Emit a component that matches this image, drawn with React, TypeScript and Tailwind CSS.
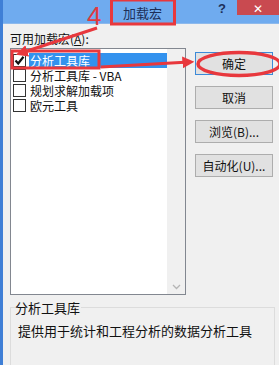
const items = [
  { label: "分析工具库", checked: true },
  { label: "分析工具库 - VBA", checked: false },
  { label: "规划求解加载项", checked: false },
  { label: "欧元工具", checked: false },
];

const buttons = ["确定", "取消", "浏览(B)...", "自动化(U)..."];

const CheckBox = ({ checked }: { checked: boolean }) => (
  <div className="w-[13px] h-[13px] border border-[#333] bg-white flex items-center justify-center shrink-0">
    {checked && (
      <svg width="11" height="11" viewBox="0 0 11 11">
        <path d="M1.5 5.5 L4.2 8.5 L9.5 1.8" stroke="#111" strokeWidth="2.2" fill="none" />
      </svg>
    )}
  </div>
);

// red marks drawn over the dialog
const Annotations = () => (
  <svg className="absolute left-0 top-0 pointer-events-none" width="279" height="365">
    <defs>
      <marker id="head" markerWidth="4" markerHeight="4" refX="2.2" refY="2" orient="auto">
        <path d="M0 0 L4 2 L0 4 Z" fill="#e8383d" />
      </marker>
    </defs>
    <rect x="108.5" y="0" width="63" height="24" fill="none" stroke="#e8383d" strokeWidth="3" />
    <rect x="9" y="51" width="87" height="17" fill="none" stroke="#e8383d" strokeWidth="3" />
    <path d="M94 28 L18 53" stroke="#e8383d" strokeWidth="3" markerEnd="url(#head)" />
    <path d="M98 67 L186 62" stroke="#e8383d" strokeWidth="3" markerEnd="url(#head)" />
    <ellipse cx="236" cy="64" rx="41" ry="11.5" fill="none" stroke="#e8383d" strokeWidth="3.5" />
  </svg>
);

export default function App() {
  return (
    <div
      className="relative w-[279px] h-[365px] overflow-hidden bg-[#f0f0f0] border-l-[3px] border-[#3f7fd6] text-[12px] text-[#111] leading-[15px]"
      style={{ fontFamily: '"Noto Sans CJK SC", "Noto Sans", sans-serif' }}
    >
      <div className="h-[24px] bg-[#6fabef] flex items-start border-b border-[#8db9ec]">
        <div className="w-[84px] shrink-0" />
        <div className="text-[26px] leading-[26px] text-[#e0393f] w-[20px] mt-[3px]" style={{ fontFamily: '"Liberation Sans", sans-serif' }}>
          4
        </div>
        <div className="ml-[4px] w-[63px] h-[24px] flex items-center justify-center text-[13px] text-[#1d2f58]">
          加载宏
        </div>
        <div className="flex-1" />
        <div className="text-[13px] font-bold text-[#1d2f58] mt-[1px] mr-[11px]" style={{ fontFamily: '"Liberation Sans", sans-serif' }}>
          ?
        </div>
        <div className="w-[42px] h-[15px] bg-[#c94a50] flex items-center justify-center text-white text-[12px] leading-none">
          ✕
        </div>
      </div>

      <div className="pl-[7px] pt-[7px]">
        <div className="h-[16px]">
          可用加载宏(<span className="underline">A</span>):
        </div>
        <div className="flex mt-[1px]">
          <div className="w-[176px] h-[247px] border border-[#828790] bg-white flex">
            <div className="flex-1 pt-[4px] flex flex-col">
              {items.map((it, i) => (
                <div key={i} className="h-[15px] flex items-center pl-[2px] gap-[3px] leading-[15px]">
                  <CheckBox checked={it.checked} />
                  <div className={i === 0 ? "bg-[#3392ee] text-white flex-1 h-[15px] pl-[1px]" : "flex-1 h-[15px] pl-[1px]"}>
                    {it.label}
                  </div>
                </div>
              ))}
            </div>
            <div className="w-[18px] bg-[#f0f0f0] flex flex-col justify-end items-center pb-[4px]">
              <svg width="9" height="6" viewBox="0 0 9 6">
                <path d="M1 1 L4.5 4.5 L8 1" stroke="#b5b5b5" strokeWidth="1.3" fill="none" />
              </svg>
            </div>
          </div>
          <div className="ml-[9px] flex flex-col gap-[11px] pt-[4px]">
            {buttons.map((b, i) => (
              <div
                key={b}
                className={
                  "w-[78px] h-[23px] flex items-center justify-center bg-[#e1e1e1] border " +
                  (i === 0 ? "border-[#3c8ad8]" : "border-[#adadad]")
                }
              >
                {b}
              </div>
            ))}
          </div>
        </div>
        <div className="mt-[12px] w-[265px] h-[80px] border border-[#dcdcdc] relative">
          <div className="absolute -top-[8px] left-[4px] bg-[#f0f0f0] pr-[1px] text-[13px]">分析工具库</div>
          <div className="pt-[15px] pl-[7px] text-[13px]">提供用于统计和工程分析的数据分析工具</div>
        </div>
      </div>

      <Annotations />
    </div>
  );
}
